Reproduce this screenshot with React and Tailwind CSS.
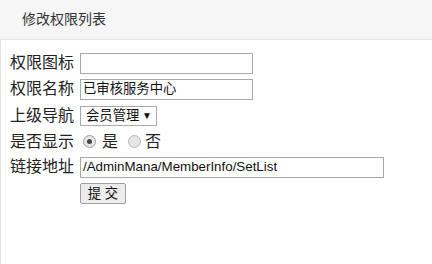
export default function App() {
  const label = "w-[70px] shrink-0 text-[16px] leading-none text-[#222]";
  const inputCls =
    "h-[21px] border border-[#a9a9a9] bg-white px-[2px] text-[13.33px] text-[#111] outline-none flex items-center";
  return (
    <div
      className="w-[432px] h-[264px] bg-white overflow-hidden"
      style={{ fontFamily: '"Liberation Sans", "Noto Sans CJK SC", sans-serif' }}
    >
      <div className="h-[40px] bg-[#f6f6f6] border-b border-[#e6e6e6] flex items-center pl-[22px] text-[14px] text-[#333]">
        修改权限列表
      </div>
      <div className="h-[224px] border-l border-[#e2e2e2] pl-[9px] pt-[10px] flex flex-col">
        <div className="h-[26px] flex items-center">
          <span className={label}>权限图标</span>
          <div className={inputCls + " w-[173px]"} />
        </div>
        <div className="h-[26px] flex items-center">
          <span className={label}>权限名称</span>
          <div className={inputCls + " w-[173px]"}>已审核服务中心</div>
        </div>
        <div className="h-[27px] flex items-center">
          <span className={label}>上级导航</span>
          <div className="h-[20px] w-[77px] border border-[#a9a9a9] bg-white flex items-center justify-between pl-[5px] pr-[4px] text-[13.33px] text-[#111]">
            <span>会员管理</span>
            <span className="text-[10px]">▼</span>
          </div>
        </div>
        <div className="h-[25px] flex items-center">
          <span className={label}>是否显示</span>
          <span className="ml-[3px] w-[13px] h-[13px] rounded-full border border-[#9a9a9a] bg-[#e6e6e6] flex items-center justify-center">
            <span className="w-[5px] h-[5px] rounded-full bg-[#444]" />
          </span>
          <span className="ml-[6px] text-[16px] leading-none text-[#222]">是</span>
          <span className="ml-[10px] w-[13px] h-[13px] rounded-full border border-[#b5b5b5] bg-[#e6e6e6]" />
          <span className="ml-[4px] text-[16px] leading-none text-[#222]">否</span>
        </div>
        <div className="h-[26px] flex items-center">
          <span className={label}>链接地址</span>
          <div className={inputCls + " w-[304px]"}>/AdminMana/MemberInfo/SetList</div>
        </div>
        <div className="h-[27px] flex items-center pl-[70px]">
          <div className="h-[21px] w-[46px] border border-[#a0a0a0] rounded-[2px] bg-[#ececec] flex items-center justify-center text-[13.33px] text-[#111]">
            提 交
          </div>
        </div>
      </div>
    </div>
  );
}
